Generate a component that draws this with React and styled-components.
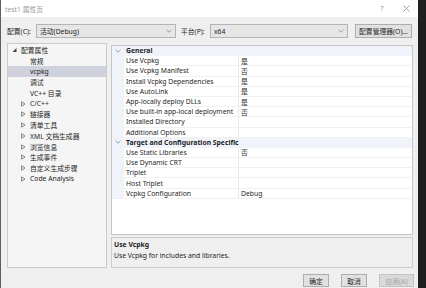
import React from "react";
import styled, { createGlobalStyle } from "styled-components";

const GlobalStyle = createGlobalStyle`
  html, body {
    margin: 0;
    padding: 0;
    background: #1e1e1e;
  }
  body {
    font-family: "Noto Sans", "Noto Sans CJK SC", sans-serif;
    font-size: 6.8px;
    color: #1e1e1e;
  }
`;

const Screen = styled.div`
  width: 426px;
  height: 288px;
  display: flex;
  overflow: hidden;
  background: #1f1f1f;
`;

const Window = styled.div`
  width: 417px;
  height: 100%;
  display: flex;
  flex-direction: column;
  background: #efefef;
  border-left: 1px solid #5e5e5e;
`;

const TitleBar = styled.div`
  height: 17px;
  flex-shrink: 0;
  display: flex;
  align-items: center;
  padding: 0 6px 0 4px;
  background: #ffffff;
  color: #9a9a9a;
`;

const TitleText = styled.div`
  flex: 1;
`;

const TitleButton = styled.div`
  width: 12px;
  display: flex;
  justify-content: center;
  align-items: center;
  margin-left: 12px;
  color: #8c8c8c;
`;

const ConfigBar = styled.div`
  height: 14px;
  margin-top: 7px;
  flex-shrink: 0;
  display: flex;
  align-items: center;
  padding-left: 6px;
`;

const FieldLabel = styled.div`
  width: 29px;
  margin-left: ${(p) => p.$offset || 0}px;
`;

const Select = styled.div`
  width: ${(p) => p.$width}px;
  height: 14px;
  box-sizing: border-box;
  display: flex;
  align-items: center;
  padding: 0 3px;
  background: #e6e6e6;
  border: 1px solid #b4b4b4;
`;

const SelectText = styled.div`
  flex: 1;
`;

const ToolButton = styled.div`
  width: 57px;
  height: 14px;
  box-sizing: border-box;
  margin-left: 7px;
  display: flex;
  align-items: center;
  justify-content: center;
  background: #e1e1e1;
  border: 1px solid #adadad;
`;

const Main = styled.div`
  height: 225px;
  margin-top: 5px;
  flex-shrink: 0;
  display: flex;
  gap: 4px;
  padding-left: 6px;
`;

const Tree = styled.div`
  width: 100px;
  box-sizing: border-box;
  padding-top: 1px;
  background: #f5f5f5;
  border: 1px solid #cacaca;
`;

const TreeRow = styled.div`
  height: 10.7px;
  display: flex;
  align-items: center;
  padding-left: ${(p) => 1 + p.$level * 9}px;
  background: ${(p) => (p.$selected ? "#cfd1dd" : "transparent")};
  white-space: nowrap;
`;

const Toggle = styled.div`
  width: 10px;
  height: 10px;
  flex-shrink: 0;
  display: flex;
`;

const TreeLabel = styled.span`
  margin-left: 2px;
`;

const RightPane = styled.div`
  width: 302px;
  display: flex;
  flex-direction: column;
  gap: 2px;
  padding-top: 2px;
`;

const Grid = styled.div`
  flex: 1;
  box-sizing: border-box;
  background: #ffffff;
  border: 1px solid #c6c6c6;
`;

const GridRow = styled.div`
  height: 10.2px;
  box-sizing: border-box;
  display: flex;
  align-items: center;
  background: ${(p) => (p.$header ? "#f0f4fa" : "#ffffff")};
  border-bottom: 1px solid ${(p) => (p.$header ? "#f0f4fa" : "#f1f1f1")};
  font-weight: ${(p) => (p.$header ? 700 : 400)};
  white-space: nowrap;
`;

const Gutter = styled.div`
  width: 12px;
  height: 100%;
  flex-shrink: 0;
  display: flex;
  align-items: center;
  justify-content: center;
  background: #f0f4fa;
`;

const NameCell = styled.div`
  width: 112px;
  height: 100%;
  flex-shrink: 0;
  display: flex;
  align-items: center;
  padding-left: 2px;
  border-right: 1px solid ${(p) => (p.$header ? "transparent" : "#e9e9e9")};
  overflow: visible;
`;

const ValueCell = styled.div`
  padding-left: 2px;
`;

const Description = styled.div`
  height: 31px;
  flex-shrink: 0;
  box-sizing: border-box;
  padding: 1px 2px;
  border: 1px solid #cdcdcd;
  background: #efefef;
  line-height: 11px;
`;

const DescTitle = styled.div`
  font-weight: 700;
`;

const Footer = styled.div`
  height: 13px;
  margin-top: 6px;
  display: flex;
  justify-content: flex-end;
  gap: 12px;
  padding-right: 4px;
`;

const DialogButton = styled.div`
  width: ${(p) => p.$width}px;
  box-sizing: border-box;
  display: flex;
  align-items: center;
  justify-content: center;
  background: ${(p) => (p.$disabled ? "#d9d9d9" : "#e1e1e1")};
  border: 1px solid ${(p) => (p.$disabled ? "#c4c4c4" : "#adadad")};
  color: ${(p) => (p.$disabled ? "#a3a3a3" : "#1e1e1e")};
`;

const Chevron = () => (
  <svg width="6" height="4" viewBox="0 0 6 4">
    <path d="M0.5 0.8 L3 3.2 L5.5 0.8" fill="none" stroke="#8a8a8a" strokeWidth="0.8" />
  </svg>
);

const Close = () => (
  <svg width="7" height="7" viewBox="0 0 7 7">
    <path d="M0.5 0.5 L6.5 6.5 M6.5 0.5 L0.5 6.5" stroke="#8c8c8c" strokeWidth="0.8" />
  </svg>
);

const Expanded = () => (
  <svg width="10" height="10" viewBox="0 0 10 10">
    <polygon points="7.5,3 7.5,7 3.5,7" fill="#444" />
  </svg>
);

const Collapsed = () => (
  <svg width="10" height="10" viewBox="0 0 10 10">
    <polygon points="3.6,2.8 7,5 3.6,7.2" fill="none" stroke="#666" strokeWidth="0.8" />
  </svg>
);

const treeItems = [
  { label: "配置属性", level: 0, toggle: "open" },
  { label: "常规", level: 1 },
  { label: "vcpkg", level: 1, selected: true },
  { label: "调试", level: 1 },
  { label: "VC++ 目录", level: 1 },
  { label: "C/C++", level: 1, toggle: "closed" },
  { label: "链接器", level: 1, toggle: "closed" },
  { label: "清单工具", level: 1, toggle: "closed" },
  { label: "XML 文档生成器", level: 1, toggle: "closed" },
  { label: "浏览信息", level: 1, toggle: "closed" },
  { label: "生成事件", level: 1, toggle: "closed" },
  { label: "自定义生成步骤", level: 1, toggle: "closed" },
  { label: "Code Analysis", level: 1, toggle: "closed" },
];

const properties = [
  { header: true, name: "General" },
  { name: "Use Vcpkg", value: "是" },
  { name: "Use Vcpkg Manifest", value: "否" },
  { name: "Install Vcpkg Dependencies", value: "是" },
  { name: "Use AutoLink", value: "是" },
  { name: "App-locally deploy DLLs", value: "是" },
  { name: "Use built-in app-local deployment", value: "否" },
  { name: "Installed Directory", value: "" },
  { name: "Additional Options", value: "" },
  { header: true, name: "Target and Configuration Specific" },
  { name: "Use Static Libraries", value: "否" },
  { name: "Use Dynamic CRT", value: "" },
  { name: "Triplet", value: "" },
  { name: "Host Triplet", value: "" },
  { name: "Vcpkg Configuration", value: "Debug" },
];

export default function App() {
  return (
    <Screen>
      <GlobalStyle />
      <Window>
        <TitleBar>
          <TitleText>test1 属性页</TitleText>
          <TitleButton>?</TitleButton>
          <TitleButton>
            <Close />
          </TitleButton>
        </TitleBar>

        <ConfigBar>
          <FieldLabel>配置(C):</FieldLabel>
          <Select $width={140}>
            <SelectText>活动(Debug)</SelectText>
            <Chevron />
          </Select>
          <FieldLabel $offset={5}>平台(P):</FieldLabel>
          <Select $width={138}>
            <SelectText>x64</SelectText>
            <Chevron />
          </Select>
          <ToolButton>配置管理器(O)...</ToolButton>
        </ConfigBar>

        <Main>
          <Tree>
            {treeItems.map((item) => (
              <TreeRow key={item.label} $level={item.level} $selected={item.selected}>
                <Toggle>
                  {item.toggle === "open" && <Expanded />}
                  {item.toggle === "closed" && <Collapsed />}
                </Toggle>
                <TreeLabel>{item.label}</TreeLabel>
              </TreeRow>
            ))}
          </Tree>

          <RightPane>
            <Grid>
              {properties.map((row) =>
                row.header ? (
                  <GridRow key={row.name} $header>
                    <Gutter>
                      <Chevron />
                    </Gutter>
                    <NameCell $header>{row.name}</NameCell>
                  </GridRow>
                ) : (
                  <GridRow key={row.name}>
                    <Gutter />
                    <NameCell>{row.name}</NameCell>
                    <ValueCell>{row.value}</ValueCell>
                  </GridRow>
                )
              )}
            </Grid>
            <Description>
              <DescTitle>Use Vcpkg</DescTitle>
              <div>Use Vcpkg for includes and libraries.</div>
            </Description>
          </RightPane>
        </Main>

        <Footer>
          <DialogButton $width={26}>确定</DialogButton>
          <DialogButton $width={26}>取消</DialogButton>
          <DialogButton $width={35} $disabled>
            应用(A)
          </DialogButton>
        </Footer>
      </Window>
    </Screen>
  );
}
